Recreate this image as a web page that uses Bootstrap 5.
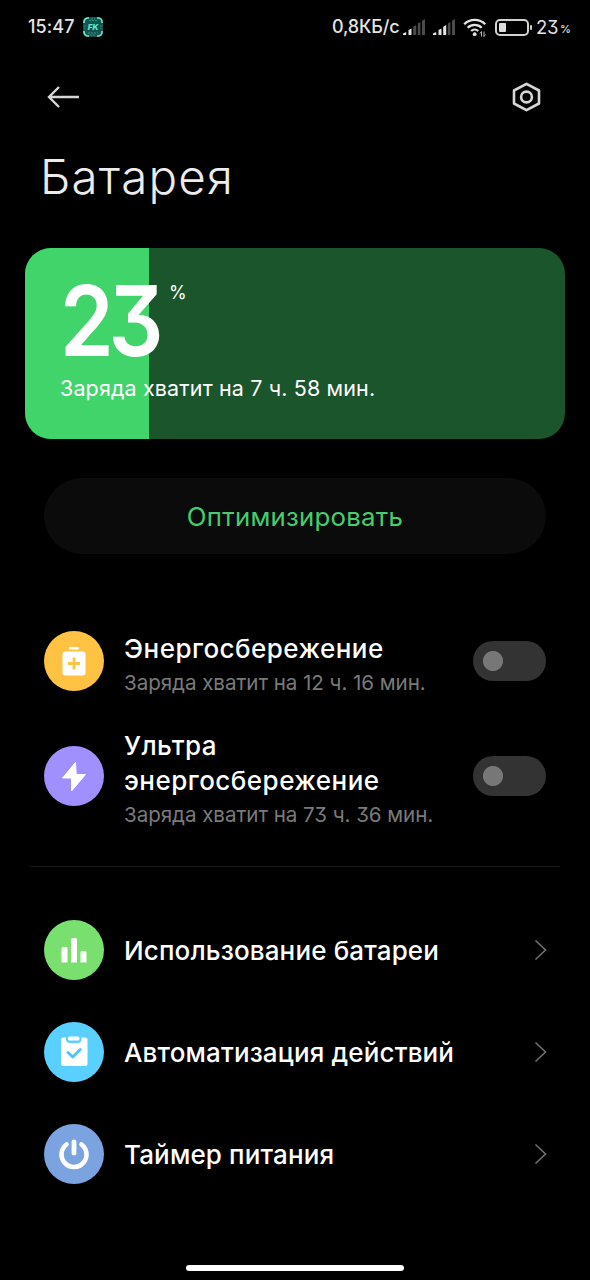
<!DOCTYPE html>
<html lang="ru" data-bs-theme="dark">
<head>
<meta charset="utf-8">
<meta name="viewport" content="width=device-width, initial-scale=1">
<title>Батарея</title>
<link href="https://cdn.jsdelivr.net/npm/bootstrap@5.3.0/dist/css/bootstrap.min.css" rel="stylesheet">
<style>
  body { background: #000; color: #fff; font-family: Inter, "Noto Sans", sans-serif; font-feature-settings: "cv09"; }
  svg { display: block; flex: none; }
  .screen { width: 590px; height: 1280px; overflow: hidden; white-space: nowrap; }
  .statusbar { height: 54px; padding: 0 20px 0 28px; font-size: 18px; font-weight: 500; color: #e4e4e4; line-height: 24px; }
  .clock { width: 55px; letter-spacing: .1px; }
  .speed { width: 71px; letter-spacing: -.15px; }
  .percent-num { font-size: 18.5px; font-weight: 400; width: 24px; letter-spacing: -.4px; }
  .percent-sign { font-size: 11px; width: 10px; padding-top: 3px; }
  .toolbar { height: 85px; padding: 0 49px 0 47px; }
  .page-title { font-size: 47.5px; font-weight: 270; line-height: 60px; letter-spacing: 1.2px; margin: 8px 0 41px 40px; color: #ececec; }
  .charge { height: 191px; margin: 0 25px; border-radius: 26px; background: #1b552b; }
  .charge-fill { background: #41d46b; }
  .charge-body { padding: 25px 35px; }
  .charge-num { font-size: 98px; font-weight: 560; line-height: 96px; letter-spacing: -6px; transform: scaleX(.88); transform-origin: left; width: 109px; }
  .charge-sign { font-size: 18px; line-height: 24px; padding-top: 8px; }
  .charge-left { font-size: 21.5px; line-height: 30px; letter-spacing: .13px; margin-top: 4px; }
  .btn-optimize { height: 76px; margin: 39px 44px 0; padding: 9px 0 6px; background: #0b0b0b; color: #44ce6d; font-size: 25.8px; font-weight: 440; letter-spacing: .25px; border: 0; }
  .modes { margin-top: 69.5px; padding: 0 44px; gap: 23.5px; }
  .disc { width: 60px; height: 60px; margin-right: 20px; flex: none; }
  .label { font-size: 26px; font-weight: 470; line-height: 35px; letter-spacing: .14px; }
  .links .label { padding-top: 1px; }
  .modes .label { letter-spacing: .47px; }
  .modes .texts { padding-top: 7px; }
  .hint { font-size: 20.6px; line-height: 30px; margin-top: 2px; letter-spacing: -.06px; color: #7a7a7a; }
  .form-switch .form-check-input { width: 73px; height: 40px; margin: 0; border: 0; background-color: #333; background-image: radial-gradient(circle at 50% 50%, #777 9.6px, transparent 10.4px); background-size: 40px 40px; background-position: 0 0; background-repeat: no-repeat; }
  .rule { height: 1px; margin: 36px 30px 32px; background: #191919; }
  .links { padding: 0 42px 0 44px; }
  .link-row { height: 102px; }
  .home { width: 218px; height: 6px; margin-top: 60px; }
</style>
</head>
<body>
<main class="screen d-flex flex-column">
  <header class="statusbar d-flex align-items-center">
    <span class="clock">15:47</span>
    <svg width="20" height="20" viewBox="0 0 20 20">
      <rect width="20" height="20" rx="5" fill="#15544f"/>
      <path d="M1 6V5a4 4 0 0 1 4-4h1M14 1h1a4 4 0 0 1 4 4v1M19 14v1a4 4 0 0 1-4 4h-1M6 19H5a4 4 0 0 1-4-4v-1" fill="none" stroke="#70e3c2" stroke-width="1.7"/>
      <path d="M6 3.5h8M8 1.8h4M5 16h10M7 18h6M2 8v4M18 8v4" stroke="#31917f" stroke-width="1" stroke-dasharray="2 1"/>
      <text x="10" y="12.8" text-anchor="middle" font-family="Inter, sans-serif" font-size="8" font-weight="800" font-style="italic" fill="#57eed3">FK</text>
    </svg>
    <span class="speed ms-auto">0,8КБ/с</span>
    <svg width="22" height="16" viewBox="0 0 22 16">
      <path d="M0 16v-1.500L3.200 13v3zM5.500 16v-5l3-1.600V16z" fill="#e4e4e4"/>
      <path d="M10.200 16V7.800l3-1.800v10zM14.800 16V4.600l2.600-1.700V16zM19 16V1.800l3-1.800v16z" fill="#4b4b4b"/>
    </svg>
    <svg class="ms-2" width="22" height="16" viewBox="0 0 22 16">
      <path d="M0 16v-1.500L3.200 13v3zM5.500 16v-5l3-1.600V16zM10.200 16V7.800l3-1.800v10z" fill="#e4e4e4"/>
      <path d="M14.800 16V4.600l2.600-1.700V16zM19 16V1.800l3-1.800v16z" fill="#4b4b4b"/>
    </svg>
    <svg class="ms-2" width="24" height="19" viewBox="0 0 24 19">
      <path d="M1.200 6.200a15 15 0 0 1 21 0M4.700 9.700a10 10 0 0 1 14 0M8.200 13a5.200 5.200 0 0 1 7 0" fill="none" stroke="#e4e4e4" stroke-width="2.300"/>
      <circle cx="11.700" cy="16.200" r="1.900" fill="#e4e4e4"/>
      <path d="M18.500 18.500v-5l-1.500 2M21 13.500v5l1.500-2" fill="none" stroke="#bbb" stroke-width="1"/>
    </svg>
    <svg class="ms-2" width="37" height="17" viewBox="0 0 37 17">
      <rect x="1" y="1" width="32" height="15" rx="4" fill="none" stroke="#d2d2d2" stroke-width="2"/>
      <rect x="4" y="4" width="7" height="9" rx="1" fill="#dedede"/>
      <rect x="35" y="6" width="2" height="5" rx="1" fill="#d2d2d2"/>
    </svg>
    <span class="percent-num ms-1">23</span><span class="percent-sign">%</span>
  </header>

  <nav class="toolbar d-flex align-items-center justify-content-between">
    <svg width="33" height="24" viewBox="0 0 33 24">
      <path d="M12 2 2 12l10 10M2 12h30" fill="none" stroke="#d6d6d6" stroke-width="2.400"/>
    </svg>
    <svg width="29" height="30" viewBox="0 0 29 30">
      <path d="M14.500 1.800 27 8.500v13L14.500 28.200 2 21.500v-13z" fill="none" stroke="#d6d6d6" stroke-width="2.600" stroke-linejoin="round"/>
      <circle cx="14.500" cy="15" r="5.400" fill="none" stroke="#d6d6d6" stroke-width="2.600"/>
    </svg>
  </nav>

  <h1 class="page-title">Батарея</h1>

  <section class="charge position-relative overflow-hidden flex-shrink-0">
    <div class="charge-fill position-absolute top-0 start-0 h-100" style="width:23%"></div>
    <div class="charge-body position-relative">
      <div class="d-flex align-items-start">
        <div class="charge-num">23</div>
        <div class="charge-sign">%</div>
      </div>
      <div class="charge-left">Заряда хватит на 7 ч. 58 мин.</div>
    </div>
  </section>

  <button type="button" class="btn btn-optimize rounded-pill flex-shrink-0">Оптимизировать</button>

  <section class="modes d-flex flex-column">
    <div class="d-flex align-items-center">
      <svg class="disc" viewBox="0 0 60 60">
        <circle cx="30" cy="30" r="30" fill="#ffc242"/>
        <rect x="25" y="16" width="10" height="2.600" rx="1" fill="#fff"/>
        <rect x="18.500" y="20.500" width="23" height="24" rx="3" fill="#fff"/>
        <path d="M30 26.500v12M24 32.500h12" stroke="#ffc242" stroke-width="2.800"/>
      </svg>
      <div class="texts flex-grow-1">
        <div class="label">Энергосбережение</div>
        <div class="hint">Заряда хватит на 12 ч. 16 мин.</div>
      </div>
      <div class="form-check form-switch p-0 m-0"><input class="form-check-input float-none d-block" type="checkbox" role="switch" aria-label="Энергосбережение"></div>
    </div>
    <div class="d-flex align-items-center">
      <svg class="disc" viewBox="0 0 60 60">
        <circle cx="30" cy="30" r="30" fill="#a090ff"/>
        <path d="M31.500 16.500 18.500 32h9v13L41.500 28.500h-9.300z" fill="#fff" stroke="#fff" stroke-width="1" stroke-linejoin="round"/>
      </svg>
      <div class="texts flex-grow-1">
        <div class="label">Ультра<br>энергосбережение</div>
        <div class="hint">Заряда хватит на 73 ч. 36 мин.</div>
      </div>
      <div class="form-check form-switch p-0 m-0"><input class="form-check-input float-none d-block" type="checkbox" role="switch" aria-label="Ультра энергосбережение"></div>
    </div>
  </section>

  <div class="rule flex-shrink-0"></div>

  <section class="links">
    <div class="link-row d-flex align-items-center">
      <svg class="disc" viewBox="0 0 60 60">
        <circle cx="30" cy="30" r="30" fill="#79e06f"/>
        <path d="M17.500 42.500V28.500a1.500 1.500 0 0 1 1.500-1.500h3a1.500 1.500 0 0 1 1.500 1.500v14zM27 42.500V19.500a1.500 1.500 0 0 1 1.500-1.500h3a1.500 1.500 0 0 1 1.500 1.500v23zM36.500 42.500V32.500a1.500 1.500 0 0 1 1.500-1.500h3a1.500 1.500 0 0 1 1.500 1.500v10z" fill="#fff"/>
      </svg>
      <span class="label flex-grow-1">Использование батареи</span>
      <svg width="14" height="22" viewBox="0 0 14 22"><path d="m1.500 1.500 10 9.500-10 9.500" fill="none" stroke="#707070" stroke-width="1.600"/></svg>
    </div>
    <div class="link-row d-flex align-items-center">
      <svg class="disc" viewBox="0 0 60 60">
        <circle cx="30" cy="30" r="30" fill="#59d0ff"/>
        <path d="M17 18a2.500 2.500 0 0 1 2.500-2.500H22V17a4 4 0 0 0 4 4h7.500a4 4 0 0 0 4-4v-1.500H41a2.500 2.500 0 0 1 2.500 2.500v23.500A2.500 2.500 0 0 1 41 44H19.500a2.500 2.500 0 0 1-2.500-2.500z" fill="#fff"/>
        <rect x="24" y="14.500" width="11.500" height="4" rx="1.500" fill="#fff"/>
        <path d="m24 30.500 4.800 4.500 7.500-7.500" fill="none" stroke="#4fc6f5" stroke-width="3" stroke-linecap="round" stroke-linejoin="round"/>
      </svg>
      <span class="label flex-grow-1">Автоматизация действий</span>
      <svg width="14" height="22" viewBox="0 0 14 22"><path d="m1.500 1.500 10 9.500-10 9.500" fill="none" stroke="#707070" stroke-width="1.600"/></svg>
    </div>
    <div class="link-row d-flex align-items-center">
      <svg class="disc" viewBox="0 0 60 60">
        <circle cx="30" cy="30" r="30" fill="#7aa3df"/>
        <path d="M22.500 20.500a12.500 12.500 0 1 0 15 0" fill="none" stroke="#fff" stroke-width="4.600" stroke-linecap="round"/>
        <path d="M30 17.800v11.400" stroke="#fff" stroke-width="4.800" stroke-linecap="round"/>
      </svg>
      <span class="label flex-grow-1">Таймер питания</span>
      <svg width="14" height="22" viewBox="0 0 14 22"><path d="m1.500 1.500 10 9.500-10 9.500" fill="none" stroke="#707070" stroke-width="1.600"/></svg>
    </div>
  </section>

  <div class="home bg-white rounded-pill mx-auto flex-shrink-0"></div>
</main>
<script src="https://cdn.jsdelivr.net/npm/bootstrap@5.3.0/dist/js/bootstrap.bundle.min.js"></script>
</body>
</html>
